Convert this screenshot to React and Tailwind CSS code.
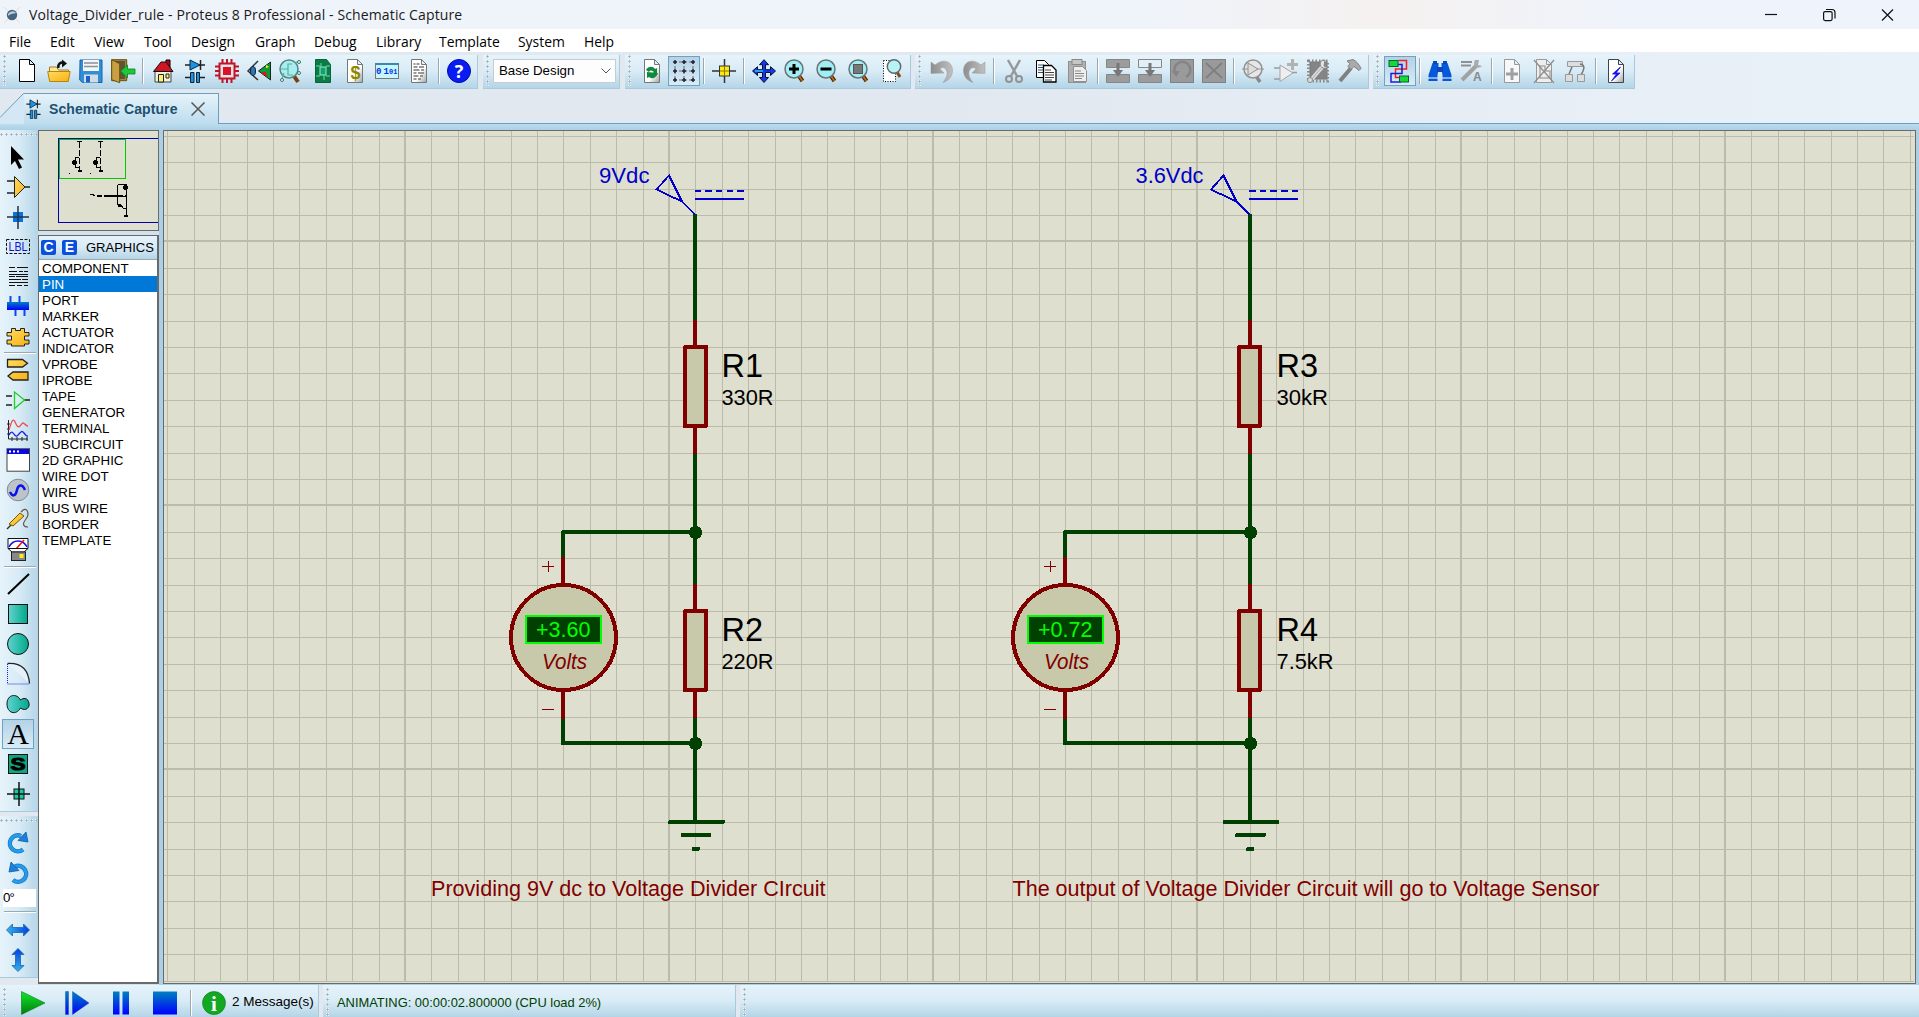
import React from "react";

/* ---------- shared pieces ---------- */

const Svg = ({ children, w = 24, h = 24 }) => (
  <svg width={w} height={h} viewBox={`0 0 ${w} ${h}`} className="block shrink-0 overflow-visible">
    {children}
  </svg>
);

const Gradients = () => (
  <svg width="0" height="0" className="absolute">
    <defs>
      <linearGradient id="gold" x1="0" y1="0" x2="1" y2="1"><stop offset="0" stopColor="#ffdc62" /><stop offset="1" stopColor="#f8b010" /></linearGradient>
      <linearGradient id="teal"><stop offset="0" stopColor="#62d3cf" /><stop offset="1" stopColor="#00a88a" /></linearGradient>
      <linearGradient id="blueV" x1="0" y1="0" x2="0" y2="1"><stop offset="0" stopColor="#0080c0" /><stop offset="1" stopColor="#0000ff" /></linearGradient>
      <linearGradient id="blueH"><stop offset="0" stopColor="#35b4e8" /><stop offset="1" stopColor="#0040e0" /></linearGradient>
      <linearGradient id="blueUp" x1="0" y1="1" x2="0" y2="0"><stop offset="0" stopColor="#35b4e8" /><stop offset="1" stopColor="#0040e0" /></linearGradient>
      <linearGradient id="greenV" x1="0" y1="0" x2="0" y2="1"><stop offset="0" stopColor="#10e828" /><stop offset="1" stopColor="#007c10" /></linearGradient>
      <linearGradient id="grayH"><stop offset="0" stopColor="#8e8e8e" /><stop offset="1" stopColor="#c0c0c0" /></linearGradient>
      <linearGradient id="paper" x1="0" y1="0" x2="1" y2="1"><stop offset="0.6" stopColor="#ffffff" /><stop offset="1" stopColor="#a0a0a0" /></linearGradient>
    </defs>
  </svg>
);

const Page = ({ stroke = "#777", fill = "url(#paper)" }) => (
  <path d="M4.500 .5h10l5 5v18h-15zM14.500 .5v5h5" fill={fill} stroke={stroke} />
);

const Lens = ({ children, cx = 10, cy = 10 }) => (
  <g>
    <path d={`M${cx + 5} ${cy + 7}l3.500 5`} stroke="#4a2000" strokeWidth="4" />
    <path d={`M${cx + 5} ${cy + 7}l3.500 5`} stroke="#b86a10" strokeWidth="2" />
    <circle cx={cx} cy={cy} r="9" fill="#9ff0f4" stroke="#6b7377" strokeWidth="1.500" />
    {children}
  </g>
);

/* ---------- toolbar icons ---------- */

const I = {
  newFile: <Svg><path d="M4.500 .5h10l5 5v17h-15zM14.500 .5v5h5" fill="#fff" stroke="#000" /></Svg>,
  open: <Svg>
    <path d="M2.500 22V8h7l2 3h10v11z" fill="#ffe79a" stroke="#a87c20" />
    <path d="M.7 12.500h22.500l-2 10h-18.500z" fill="url(#gold)" stroke="#b88410" />
    <path d="M11.500 9c-1-4 2-6 5-5.500" fill="none" stroke="#111" strokeWidth="2.500" /><path d="M15 .5l5 4l-5 4z" fill="#111" />
  </Svg>,
  save: <Svg>
    <path d="M1 1h22v22.500H3.500L.7 21z" fill="#2f8fd8" stroke="#1b62a6" />
    <rect x="4" y="1" width="16" height="11" fill="#f4f6f8" /><path d="M5 4h14M5 7.500h14" stroke="#8a9096" strokeWidth="1.300" />
    <rect x="5" y="15.500" width="14" height="8" fill="#d5dbe2" /><rect x="7" y="17" width="4" height="6.500" fill="#1b62c8" />
  </Svg>,
  exit: <Svg>
    <path d="M.7 .7h15v21h-15z" fill="#a88438" stroke="#6b5010" /><path d="M4 2h10v18H9z" fill="#5c5538" />
    <path d="M.7 .7l8 4v19l-8-3z" fill="#c9a040" stroke="#6b5010" />
    <path d="M9.500 12l7-6v4H24v5h-7.500v4z" fill="#1ec838" stroke="#0d8020" strokeWidth=".8" />
  </Svg>,
  home: <Svg>
    <path d="M15 1h4v8h-4z" fill="#c00010" stroke="#000" /><path d="M4 12h16v11H4z" fill="#eef2dc" stroke="#444" />
    <path d="M2.500 12.500L10 3h5l7 9.500z" fill="#cf1622" stroke="#111" /><path d="M7.500 15.500h5v7.500h-5z" fill="#fff36a" stroke="#222" /><path d="M15 15h3v4h-3z" fill="#fff36a" stroke="#222" />
  </Svg>,
  schematic: <Svg>
    <path d="M2 6h20M17.500 1v10" stroke="#222" strokeWidth="1.500" /><path d="M7 1v10l10-5z" fill="#1694e8" stroke="#123" />
    <path d="M2 18.500h6M17 18.500h5" stroke="#222" strokeWidth="1.500" />
    <path d="M7.500 13.500h3.500v10H7.500zM13.500 13.500h3v10h-3z" fill="#1694e8" stroke="#123" />
  </Svg>,
  chip: <Svg>
    <path d="M7.500 0v24M12 0v24M16.500 0v24M0 7.500h24M0 12h24M0 16.500h24" stroke="#c01428" strokeWidth="2" />
    <rect x="4.500" y="4.500" width="15" height="15" fill="#ece4e4" stroke="#c01428" strokeWidth="2" /><rect x="8" y="8" width="8" height="8" fill="#d8142a" />
  </Svg>,
  viewer3d: <Svg>
    <path d="M11 2L1 12l10 9" fill="none" stroke="#333" strokeWidth="1.500" /><ellipse cx="6" cy="12" rx="2.500" ry="4.500" fill="#2a78b8" stroke="#123" />
    <path d="M23.500 3v18l-12-9z" fill="#0c9a3c" stroke="#222" /><path d="M14 13l6 5l-1-5z" fill="#f01010" /><path d="M19 6l3 2l-3 1z" fill="#ff0" />
  </Svg>,
  gerber: <Svg>
    <path d="M15 17l4 6" stroke="#7a4010" strokeWidth="4" />
    <circle cx="10" cy="10" r="9" fill="#a6eef0" stroke="#5c8484" strokeWidth="1.500" />
    <path d="M2 10h7v-5h4M9 10v6h5M5 14l-2 6M16 4l4-2" fill="none" stroke="#5cae9a" strokeWidth="1.200" />
    <circle cx="20" cy="3" r="1.500" fill="#eff" stroke="#28806a" /><circle cx="3" cy="21" r="1.500" fill="#eff" stroke="#28806a" /><circle cx="20" cy="14" r="1.500" fill="#eff" stroke="#28806a" />
  </Svg>,
  green: <Svg>
    <path d="M4.500 .5h11l4 5v18h-15z" fill="#0c7c44" stroke="#064" /><rect x="9" y="8" width="6" height="8" fill="#14a070" stroke="#8ff0c8" />
    <path d="M5 7h4M5 17h4M15 7h4M15 17h4M10 4v4M13 16v5" stroke="#68dca8" />
  </Svg>,
  bill: <Svg><Page /><text x="12.500" y="20" textAnchor="middle" fontSize="18" fontWeight="bold" fontFamily="Liberation Sans" fill="#8f8600">$</text></Svg>,
  source: <Svg><rect x=".5" y="4.500" width="23" height="15" fill="#c6f6ff" stroke="#777" /><path d="M0 5h24" stroke="#3a88b0" strokeWidth="2" />
    <text x="1" y="14.500" fontSize="9" textLength="13" fontWeight="bold" fontFamily="Liberation Mono" fill="#0030e8">01</text><text x="14" y="14.500" fontSize="7" fontWeight="bold" fontFamily="Liberation Mono" fill="#0030e8">01</text></Svg>,
  notes: <Svg><Page /><path d="M6.500 5h2M9.500 5h3M6.500 8h4M12 8h5M6.500 11h6M14 11h3M6.500 14h3M11 14h6M6.500 17h5M13 17h3M6.500 20h3M11 20h3" stroke="#777" strokeWidth="1.300" /></Svg>,
  help: <Svg><circle cx="12" cy="12" r="11.500" fill="#0a1cf4" stroke="#0008b0" /><text x="12" y="18.500" textAnchor="middle" fontSize="18" fontWeight="bold" fontFamily="Open Sans" fill="#fff">?</text></Svg>,

  refresh: <Svg><Page /><path d="M6 11c2-4 7-4 9-1l2-1v6h-5l2-2c-2-2-4-2-5 0zM18 14c-2 6-7 6-9 4l-2 1v-6" fill="#0e8a3e" /></Svg>,
  grid: <Svg><path d="M2 3h20M2 12h20M2 21h20M3 2v20M12 2v20M21 2v20" stroke="#667" strokeDasharray="3 2" />
    {[3, 12, 21].map((x) => [3, 12, 21].map((y) => <path key={x + "," + y} d={`M${x - 2} ${y}h4M${x} ${y - 2}v4`} stroke="#223" strokeWidth="1.500" />))}</Svg>,
  origin: <Svg><path d="M0 12h24M12.500 0v24" stroke="#333" strokeWidth="1.500" /><rect x="7.500" y="7" width="10" height="10" fill="#ffe818" stroke="#333" /><path d="M8 12h9M12.500 7.500v9" stroke="#8a7a00" /></Svg>,
  pan: <Svg><path d="M12 .7l4.500 5h-3v5h5v-3l5 4.300l-5 4.500v-3h-5v5h3l-4.500 5l-4.500-5h3v-5h-5v3l-5-4.500l5-4.300v3h5v-5h-3z" fill="#1238f0" stroke="#061030" /><path d="M3 12h8" stroke="#28a0f0" strokeWidth="2" /></Svg>,
  zoomIn: <Svg><Lens><path d="M5 10h10M10 5v10" stroke="#000" strokeWidth="3" /></Lens></Svg>,
  zoomOut: <Svg><Lens><path d="M4.500 10h11" stroke="#000" strokeWidth="3" /></Lens></Svg>,
  zoomAll: <Svg><Lens><rect x="5.500" y="5.500" width="9" height="9" fill="#777" stroke="#555" /></Lens></Svg>,
  zoomArea: <Svg><rect x="3.500" y="1.500" width="12" height="21" fill="#fff" stroke="#000" strokeDasharray="1 1.500" /><path d="M17 13l3 5" stroke="#8a4a10" strokeWidth="3" /><circle cx="14" cy="7.500" r="6.700" fill="#b8f2f4" stroke="#5c6a70" strokeWidth="1.500" /></Svg>,

  undo: <Svg><path d="M1 3l4 3c8-7 17-4 17.500 5c0 7-4 10.500-9.500 12.500c4-5 5-9 3.500-12c-1.500-3-4-4-6.500-1.500l4 4L1 14.500z" fill="url(#grayH)" stroke="#999" strokeWidth=".5" /></Svg>,
  redo: <Svg><path d="M23 3l-4 3C11-1 2 2 1.500 11c0 7 4 10.500 9.500 12.500c-4-5-5-9-3.500-12c1.500-3 4-4 6.500-1.500l-4 4l13 .5z" fill="url(#grayH)" stroke="#999" strokeWidth=".5" /></Svg>,
  cut: <Svg><path d="M6 1l9 16M18 1L9 17" stroke="#989898" strokeWidth="2.500" /><ellipse cx="7" cy="20" rx="3" ry="3" fill="none" stroke="#929292" strokeWidth="2" /><ellipse cx="17" cy="20" rx="3" ry="3" fill="none" stroke="#929292" strokeWidth="2" /></Svg>,
  copy: <Svg><path d="M2.500 1.500h8l4 4v13h-12z" fill="#fff" stroke="#000" /><path d="M4 6h6M4 8.500h6M4 11h6M4 13.500h6" stroke="#357" />
    <path d="M9.500 6.500h8l4.500 4.500v12H9.500z" fill="#fff" stroke="#000" strokeWidth="1.300" /><path d="M11 11h6M11 13.500h9M11 16h9M11 18.500h9M11 21h7" stroke="#444" /></Svg>,
  paste: <Svg><rect x="2.500" y="2.500" width="17" height="21" fill="#b0b0b0" stroke="#909090" /><rect x="6" y=".5" width="10" height="5" fill="#c6c6c6" stroke="#888" />
    <path d="M7.500 7.500h9l4 4v11h-13z" fill="#eee" stroke="#909090" /><path d="M9 12h6M9 14.500h9M9 17h9M9 19.500h7" stroke="#888" /></Svg>,
  blockCopy: <Svg><path d="M.5 .5h23v8H.5zM.5 15.500h23v8H.5z" fill="#9c9c9c" stroke="#868686" /><path d="M12 4v9" stroke="#777" strokeWidth="3" /><path d="M7 11h10l-5 7z" fill="#777" /></Svg>,
  blockMove: <Svg><path d="M.5 .5h23v8H.5z" fill="#e2eff6" stroke="#868686" /><path d="M.5 15.500h23v8H.5z" fill="#9c9c9c" stroke="#868686" /><path d="M12 4v9" stroke="#777" strokeWidth="3" /><path d="M7 11h10l-5 7z" fill="#777" /></Svg>,
  blockRotate: <Svg><rect x=".5" y=".5" width="23" height="23" fill="#9a9a9a" stroke="#808080" /><path d="M5 14a8 8 0 1 1 11 4" fill="none" stroke="#858585" strokeWidth="2.500" /><path d="M1.500 12h8l-3 6z" fill="#858585" /></Svg>,
  blockDelete: <Svg><rect x=".5" y=".5" width="23" height="23" fill="#9a9a9a" stroke="#808080" /><path d="M4 4l16 15M20 4L4 19" stroke="#808080" strokeWidth="2" /></Svg>,
  pick: <Svg><path d="M14 17l4 6" stroke="#888" strokeWidth="3.500" /><circle cx="11" cy="10" r="9" fill="#e6e6e6" stroke="#929292" strokeWidth="1.500" /><path d="M0 10h22" stroke="#929292" /><path d="M6 4v12l10-6z" fill="#ddd" stroke="#929292" /></Svg>,
  makeDevice: <Svg><path d="M0 9h6M0 20h6M18 13.500h5" stroke="#9a9a9a" strokeWidth="1.500" /><path d="M6 6v16.500l13-8.500z" fill="#eee" stroke="#a5a5a5" /><path d="M18.500 0v11M13 5.500h11" stroke="#b2b2b2" strokeWidth="3" /></Svg>,
  packaging: <Svg><rect x="4" y="3" width="17" height="17" fill="#858585" stroke="#777" /><path d="M2.500 2h19v20h-19z" fill="none" stroke="#888" strokeWidth="3" strokeDasharray="1.500 2" />
    <path d="M5 21l12-14" stroke="#ddd" strokeWidth="4" /><path d="M5 21l12-14" stroke="#aaa" strokeWidth="1" /><path d="M15 2c-3 6 3 9 7 6l-4-1l1-6z" fill="#e5e5e5" stroke="#888" /><circle cx="4" cy="21" r="2.500" fill="#ddd" stroke="#888" /></Svg>,
  decompose: <Svg><path d="M2 22L13 9" stroke="#808080" strokeWidth="4" /><path d="M9 2l6-1.500c4 2 6 5 8 9l-2 2l-5-4l-3 3l-3-3l2-3z" fill="#aaa" stroke="#808080" /></Svg>,

  autorouter: <Svg>
    <path d="M10.500 1.500h8v8.500h-11v8.500h8" fill="none" stroke="#f02020" strokeWidth="1.500" /><path d="M9 5.500h5v9H3v8.500h10" fill="none" stroke="#1818e8" strokeWidth="1.500" />
    <rect x="1" y="1.500" width="9" height="6" fill="#18d838" stroke="#063" /><rect x="11.500" y="17" width="9" height="6" fill="#18d838" stroke="#063" /></Svg>,
  search: <Svg><path d="M4.500 4h6v7l-1 5v6H.5v-6zM13.500 4h6l4 12v6h-9v-6l-1-5z" fill="#0758d8" /><path d="M5 2h4v3H5zM15 2h4v3h-4zM9 8h6v5H9z" fill="#0a48c0" /><path d="M0 19h10M14 19h10" stroke="#fff" /></Svg>,
  propertyTool: <Svg><path d="M1 3h11M1 6.500h10" stroke="#909090" strokeWidth="2" /><path d="M2 21L17 6" stroke="#a2a2a2" strokeWidth="4" /><path d="M15 1c-3 6 3 10 7 6l-4-1l1-5z" fill="#aaa" /><text x="13" y="22" fontSize="12" fontWeight="bold" fontFamily="Liberation Sans" fill="#888">A</text></Svg>,
  addSheet: <Svg><Page stroke="#999" fill="#f6f8f9" /><path d="M6 15h12M12 9v12" stroke="#a0a0a0" strokeWidth="3" /></Svg>,
  delSheet: <Svg><Page stroke="#999" fill="#eee" /><path d="M8 7h5v5h5v7H8z" fill="none" stroke="#aaa" strokeWidth="1.500" /><path d="M2 1l20 23M22 1L2 24" stroke="#8d8d8d" strokeWidth="1.300" /></Svg>,
  exitParent: <Svg><path d="M3.500 2.500h15v5h-15z" fill="#ddd" stroke="#999" /><path d="M8 8L5 15M16 5c6 1 4 6 1 11" fill="none" stroke="#777" strokeWidth="1.500" /><path d="M1.500 15.500h7v7h-7zM13.500 15.500h7v7h-7z" fill="#ddd" stroke="#999" /></Svg>,
  erc: <Svg><Page stroke="#444" /><path d="M16.500 8l-8 7h4l-5 7l8.500-8h-4z" fill="#1010ec" stroke="#1010ec" strokeWidth=".8" /></Svg>,
};

/* ---------- left mode bar icons ---------- */

const M = {
  select: <Svg><path d="M5 1v19l4-4l4 8l3-1.500l-4-8h6z" fill="#000" /></Svg>,
  component: <Svg><path d="M1 6h8M1 18h8M18 12h6" stroke="#222" strokeWidth="1.500" /><path d="M8.500 1.500v21L19 12z" fill="url(#gold)" stroke="#222" /></Svg>,
  junction: <Svg><rect x="7" y="7" width="10" height="10" fill="#0870e0" /><path d="M1 12h22M12 1v23" stroke="#234" strokeWidth="1.500" /></Svg>,
  label: <Svg><rect x=".5" y="4.500" width="23" height="14" fill="none" stroke="#111" strokeDasharray="3 1.500" /><text x="2.500" y="16" fontSize="12" textLength="19" lengthAdjust="spacingAndGlyphs" fontFamily="Liberation Sans" fill="#1010d8">LBL</text></Svg>,
  script: <Svg><g shapeRendering="crispEdges"><path d="M3 2.500h6M11 2.500h11M3 6.500h8M13 6.500h4M18 6.500h4M3 9.500h19M3 11.500h6M10 11.500h12M3 14.500h12M16 14.500h6M3 17.500h19M3 20.500h6M11 20.500h5M18 20.500h4" stroke="#111" /></g></Svg>,
  bus: <Svg><path d="M4.500 1v10M13.500 1v10M9.500 13v8M18.500 13v8" stroke="#0a48e8" strokeWidth="2" /><rect x="1" y="7" width="22" height="8" fill="url(#blueV)" /></Svg>,
  subcircuit: <Svg><path d="M5.500 3.500h4v2h5v-2h4v4h4.500v3.500h-4.500v4h4.500v4h-4.500v2h-13v-2H1v-4h4.500v-4H1V7.500h4.500z" fill="url(#gold)" stroke="#222" /></Svg>,
  terminal: <Svg><path d="M1.500 1.500h15l5 3.800l-5 3.700h-15zM22 14h-15l-5 4l5 4h15z" fill="url(#gold)" stroke="#222" strokeWidth="1.300" /></Svg>,
  pin: <Svg><path d="M0 8h6M0 17h6M18 12h6" stroke="#222" strokeWidth="1.500" /><path d="M8.500 4v16.500L18.500 12z" fill="none" stroke="#20d020" strokeWidth="1.300" /></Svg>,
  graph: <Svg><path d="M2.500 2v19H22M6 19v4M11 19v4M16 19v4M21 19v4M1 6h3M1 11h3M1 16h3" stroke="#222" fill="none" /><path d="M3 12C6 2 7-1 10 6s5-1 7-1s2 3 5 3" fill="none" stroke="#f05050" strokeWidth="1.300" /><path d="M3 17c4-8 5 3 8 1s4-7 7-3s3 3 4 3" fill="none" stroke="#2020e8" strokeWidth="1.300" /></Svg>,
  active: <Svg><rect x="1" y=".7" width="22.500" height="22.500" fill="#fff" stroke="#444" /><path d="M1 1h22v5H1z" fill="#0808e0" /><path d="M3 3.500h2M7 3.500h2M11 3.500h2" stroke="#fff" strokeWidth="2" /></Svg>,
  generator: <Svg><circle cx="12" cy="12" r="10.800" fill="#bcc3c9" stroke="#858b90" /><path d="M4 14c3 6 6 3 7-2s5-7 8 0" fill="none" stroke="#0a10f0" strokeWidth="2.500" /></Svg>,
  probe: <Svg><path d="M1 21l4-4" stroke="#333" strokeWidth="1.500" /><path d="M3 16L14 5l4 3L7 18z" fill="url(#gold)" stroke="#765400" /><path d="M15 4c6-7 9 2 5 7s-3 8 2 8" fill="none" stroke="#654" strokeWidth="1.200" /></Svg>,
  instrument: <Svg><path d="M2 .5h20v10H2z" fill="#fff" stroke="#111" /><path d="M3 9c4-8 14-8 18 0" fill="none" stroke="#1010ee" strokeWidth="1.500" /><path d="M10 11l8-9" stroke="#f01010" strokeWidth="1.500" /><path d="M2 10.500h20l-4 3.500H6z" fill="#fff" stroke="#111" /><rect x="5.500" y="14" width="14" height="8.500" fill="#888" stroke="#222" /><rect x="13.500" y="16" width="4" height="4" fill="#ffe820" /></Svg>,
  line: <Svg><path d="M2 22L23 2" stroke="#000" strokeWidth="2" /></Svg>,
  box: <Svg><rect x="2.500" y="2.500" width="19" height="19" fill="url(#teal)" stroke="#111" /></Svg>,
  circle: <Svg><circle cx="12" cy="12" r="10.500" fill="url(#teal)" stroke="#111" /></Svg>,
  arc: <Svg><path d="M1.500 2v20h22" fill="none" stroke="#2020e0" strokeDasharray="1 1" /><path d="M1.500 1.500c15-1 21 7 22 20" fill="#e5f2fb" stroke="#222" strokeWidth="1.300" /></Svg>,
  path: <Svg><path d="M14.500 8C11 1 1 2 1 12c0 9 9 12 13.500 4C20 20 24 15 23 11.500C22 5 17 6 14.500 8z" fill="url(#teal)" stroke="#111" /></Svg>,
  text: <Svg><text x="12" y="22" textAnchor="middle" fontSize="30" fontFamily="Liberation Serif" fill="#000">A</text></Svg>,
  symbol: <Svg><rect x="2.500" y="2.500" width="19" height="19" fill="#0ca580" stroke="#111" /><text x="4.500" y="17.500" fontSize="16" textLength="15" lengthAdjust="spacingAndGlyphs" fontWeight="bold" fontFamily="Liberation Sans" fill="#000" stroke="#000">S</text></Svg>,
  marker: <Svg><rect x="8" y="7" width="10" height="10" fill="#18c8a0" stroke="#111" /><path d="M1 12h23M13 0v24" stroke="#111" strokeWidth="1.500" /></Svg>,
  cw: <Svg><path d="M17 18.500a8 8 0 1 1-2-13.500" fill="none" stroke="#1676c8" strokeWidth="4.500" /><path d="M17 18.500a8 8 0 1 1-2-13.500" fill="none" stroke="#269ce8" strokeWidth="3" /><path d="M12 9.500l8-8.500l2 10z" fill="#1b80dc" stroke="#0f5ca4" strokeWidth=".8" /></Svg>,
  ccw: <Svg><path d="M7 19a8 8 0 1 0 2-13.500" fill="none" stroke="#1676c8" strokeWidth="4.500" /><path d="M7 19a8 8 0 1 0 2-13.500" fill="none" stroke="#269ce8" strokeWidth="3" /><path d="M13 9.500L5 1L3 11z" fill="#1b80dc" stroke="#0f5ca4" strokeWidth=".8" /></Svg>,
  flipH: <Svg><path d="M.5 12l6-6v3.500h11V6l6 6l-6 6v-3.500h-11V18z" fill="url(#blueH)" stroke="#1b62b4" strokeWidth=".8" /></Svg>,
  flipV: <Svg><path d="M12 .5l6 6h-3.500v11H18l-6 6l-6-6h3.500v-11H6z" fill="url(#blueUp)" stroke="#1b62b4" strokeWidth=".8" /></Svg>,
};

/* ---------- chrome ---------- */

const BAR = "bg-linear-to-b from-[#e6f3fa] via-[#d8ebf6] to-[#b4d5e7]";

const Handle = ({ className = "" }) => (
  <div className={`w-[3px] bg-[radial-gradient(circle_at_1.5px_1.5px,#9aabb8_0.8px,#f8fcff_1.5px,transparent_2px)] bg-[length:3px_5px] ${className}`} />
);

const Btn = ({ children, active }) => (
  <div className={active ? "flex h-[30px] w-8 items-center justify-center border border-[#6fa2c0] bg-linear-to-b from-[#b4d2e6] to-[#d9ebf6]" : "flex h-[30px] w-8 items-center justify-center"}>{children}</div>
);

const Sep = () => (
  <div className="flex h-[26px] w-2 justify-center"><div className="w-px bg-[#9ca7ae]" /><div className="w-px bg-white" /></div>
);

const Group = ({ items, active, className }) => (
  <div className={`flex h-[34px] items-center border-r border-b border-[#a9c9dd] pb-[2px] ${BAR} ${className}`}>
    <Handle className="ml-[3px] mr-[5px] h-[31px]" />
    {items.map((k, i) => (k === "|" ? <Sep key={i} /> : <Btn key={i} active={k === active}>{I[k]}</Btn>))}
  </div>
);

const TitleBar = () => (
  <div className="flex h-[29px] items-center bg-linear-to-r from-[#eff3fa] from-60% via-[#f5f1f0] via-72% to-[#eff3fb] to-85%">
    <svg width="18" height="18" viewBox="0 0 18 18" className="ml-[3px] block">
      <path d="M1 1l16 16M17 1L1 17" stroke="#e6c8a0" strokeWidth="1" opacity=".6" />
      <circle cx="9" cy="9" r="5.200" fill="#4a6480" /><path d="M5 8c3-4 6-3 8-1c-2 1-5 0-8 3z" fill="#b8d0e2" />
    </svg>
    <span className="ml-[8px] whitespace-nowrap font-['Open_Sans'] text-[14px] tracking-[0.12px] text-[#1a1a1a]">Voltage_Divider_rule - Proteus 8 Professional - Schematic Capture</span>
    <svg width="140" height="14" viewBox="0 0 140 14" className="ml-auto mr-[19px] block" fill="none" stroke="#111" strokeWidth="1.200">
      <path d="M5 6.500h12" />
      <rect x="63.600" y="3.600" width="8.500" height="9" rx="1.500" /><path d="M66 1.500h6a3 3 0 0 1 3 3v6" />
      <path d="M122 1.500l11 11M133 1.500l-11 11" />
    </svg>
  </div>
);

const MENU = [["File", "w-[41px]"], ["Edit", "w-11"], ["View", "w-[50px]"], ["Tool", "w-[47px]"], ["Design", "w-16"], ["Graph", "w-[59px]"], ["Debug", "w-[62px]"], ["Library", "w-[63px]"], ["Template", "w-[79px]"], ["System", "w-[66px]"], ["Help", "w-11"]];

const MenuBar = () => (
  <div className="flex h-[23px] items-center bg-white pt-[2px] pl-[9px] font-['Open_Sans'] text-[13.9px] leading-5 text-black">
    {MENU.map(([t, w]) => <div key={t} className={`shrink-0 ${w}`}>{t}</div>)}
  </div>
);

const Toolbars = () => (
  <div className="flex h-[37px] gap-[5px] bg-linear-to-r from-[#e2e8ef] from-50% to-[#eaf2f9] pt-[3px]">
    <Group className="w-[478px]" items={["newFile", "open", "save", "exit", "|", "home", "schematic", "chip", "viewer3d", "gerber", "green", "bill", "source", "notes", "|", "help"]} />
    <div className={`flex h-[34px] w-[137px] items-center border-r border-b border-[#a9c9dd] pb-[2px] ${BAR}`}>
      <Handle className="ml-[3px] h-[31px]" />
      <div className="ml-[4px] flex h-6 w-[123px] items-center justify-between border border-[#c6cdd2] bg-[#fdfdfd] pl-[5px] pr-[4px]">
        <span className="whitespace-nowrap font-['Liberation_Sans'] text-[13.3px] text-black">Base Design</span>
        <svg width="10" height="6" viewBox="0 0 10 6" fill="none" stroke="#555"><path d="M.5 .5L5 5L9.500 .5" /></svg>
      </div>
    </div>
    <Group className="w-[286px]" active="grid" items={["refresh", "grid", "|", "origin", "|", "pan", "zoomIn", "zoomOut", "zoomAll", "zoomArea"]} />
    <Group className="-ml-px w-[454px]" items={["undo", "redo", "|", "cut", "copy", "paste", "|", "blockCopy", "blockMove", "blockRotate", "blockDelete", "|", "pick", "makeDevice", "packaging", "decompose"]} />
    <Group className="-ml-px w-[262px]" active="autorouter" items={["autorouter", "|", "search", "propertyTool", "|", "addSheet", "delSheet", "exitParent", "|", "erc"]} />
  </div>
);

const TabBar = () => (
  <div className="flex h-[41px] flex-col bg-linear-to-r from-[#e2e8ef] from-50% to-[#eaf2f9]">
    <div className="mt-[4px] flex h-[31px]">
      <svg width="24" height="31" viewBox="0 0 24 31" className="block"><path d="M0 31V24.500L23.500 .5H24V31z" fill="#d3e8f4" /><path d="M0 24.500L23.500 .5H24" fill="none" stroke="#6b9fbd" /></svg>
      <div className="flex w-[195px] items-center border-t border-r border-[#6b9fbd] bg-linear-to-b from-[#e6f3fa] to-[#bcdcee]">
        <svg width="17" height="20" viewBox="0 0 24 24" className="ml-[1px] block" preserveAspectRatio="none">{I.schematic.props.children}</svg>
        <span className="ml-[7px] whitespace-nowrap font-['Liberation_Sans'] text-[14px] font-bold tracking-[0.1px] text-[#20506f]">Schematic Capture</span>
        <svg width="14" height="14" viewBox="0 0 14 14" className="ml-[13px] block" stroke="#555" strokeWidth="1.500"><path d="M.5 .5l13 13M13.500 .5l-13 13" /></svg>
      </div>
      <div className="flex-1 border-b border-[#6b9fbd]" />
    </div>
    <div className="h-[6px] bg-linear-to-b from-[#bcdcee] to-[#abd0e4]" />
  </div>
);

/* ---------- left side ---------- */

const MBtn = ({ k, active }) => (
  <div className={active ? "flex h-[30px] w-8 items-center justify-center border border-[#6fa2c0] bg-linear-to-b from-[#b4d2e6] to-[#d9ebf6]" : "flex h-[30px] w-8 items-center justify-center"}>{M[k]}</div>
);
const HSep = () => <div className="flex h-[3px] w-8 flex-col"><div className="h-px bg-[#9ca7ae]" /><div className="h-px bg-white" /></div>;
const HHandle = () => <div className="h-[3px] w-[37px] bg-[radial-gradient(circle_at_1.5px_1.5px,#9aabb8_0.8px,#f8fcff_1.5px,transparent_2px)] bg-[length:5px_3px]" />;
const VBAR = "bg-linear-to-r from-[#e6f3fa] via-[#d8ebf6] to-[#b4d5e7]";

const ModeBar = () => (
  <div className="flex w-[38px] shrink-0 flex-col bg-[#e2e8ef]">
    <div className={`flex h-[682px] flex-col border-b border-[#a9c9dd] pt-[3px] ${VBAR}`}>
      <HHandle />
      <div className="ml-[2px] mt-[6px] flex flex-col">
        {["select", "component", "junction", "label", "script", "bus", "subcircuit"].map((k) => <MBtn key={k} k={k} />)}
        <div className="ml-[2px]"><HSep /></div>
        {["terminal", "pin", "graph", "active", "generator", "probe", "instrument"].map((k) => <MBtn key={k} k={k} />)}
        <div className="mt-px ml-[2px]"><HSep /></div>
        {["line", "box", "circle", "arc", "path", "text", "symbol", "marker"].map((k) => <MBtn key={k} k={k} active={k === "text"} />)}
      </div>
    </div>
    <div className={`mt-[4px] flex h-[162px] flex-col border-b border-[#a9c9dd] pt-[3px] ${VBAR}`}>
      <HHandle />
      <div className="ml-[2px] mt-[6px] flex flex-col"><MBtn k="cw" /><MBtn k="ccw" /></div>
      <div className="ml-[3px] mt-[1px] flex h-[18px] w-[33px] items-center bg-white font-['Liberation_Sans'] text-[13.3px] text-black"><span className="tracking-[-0.8px]">0°</span></div>
      <div className="ml-[4px] mt-[4px]"><HSep /></div>
      <div className="ml-[2px] mt-px flex flex-col"><MBtn k="flipH" /><MBtn k="flipV" /></div>
    </div>
  </div>
);

const Overview = () => (
  <div className="h-[101px] border border-[#6a6a6a] bg-[#dfdfcf]">
    <svg width="119" height="99" viewBox="39 131 119 99" className="block" fill="none" shapeRendering="crispEdges">
      <path d="M160 138.500H58.500V222.500H160" stroke="#0000b0" />
      <rect x="59.500" y="139.500" width="66" height="39" stroke="#00c800" />
      {[0, 21].map((d) => (
        <g key={d} stroke="#000" transform={`translate(${d - 0.5} 0)`}>
          <path d="M77.500 141.500h5" /><path d="M80 142v31" strokeDasharray="6 2" />
          <path d="M79.500 157.500h-4v10h4" /><circle cx="75" cy="162.500" r="2" fill="#000" /><path d="M78.500 171h4" strokeWidth="2" /><path d="M69 173.500h1" />
        </g>
      ))}
      <g stroke="#000"><path d="M90 194.500h3l2 1.500h31" strokeWidth="1.200" strokeDasharray="5 2" /><path d="M109 196h8" strokeWidth="2" /><path d="M117.500 184.500h9v5M117.500 184.500v20h3l3 4h3M126.500 189v28M117.500 196.500h9" /><circle cx="125.500" cy="187.500" r="2" fill="#000" /><path d="M118 205.500h4M124 216h4" strokeWidth="2" /></g>
    </svg>
  </div>
);

const GRAPHICS = ["COMPONENT", "PIN", "PORT", "MARKER", "ACTUATOR", "INDICATOR", "VPROBE", "IPROBE", "TAPE", "GENERATOR", "TERMINAL", "SUBCIRCUIT", "2D GRAPHIC", "WIRE DOT", "WIRE", "BUS WIRE", "BORDER", "TEMPLATE"];

const ObjectPanel = () => (
  <div className="flex w-[121px] shrink-0 flex-col gap-[4px] bg-[#d0e2ee] font-['Liberation_Sans'] text-[13.33px] text-black">
    <Overview />
    <div className="flex h-[749px] flex-col border-2 border-t-1 border-l-1 border-[#6a6a6a] bg-white">
      <div className={`flex h-[24px] items-center border-b border-[#9aa] pl-[2px] ${BAR}`}>
        <div className="flex h-[15px] w-[15px] items-center justify-center rounded-xs bg-[#0a50dc] text-[14px] font-bold text-white">C</div>
        <div className="ml-[6px] flex h-[15px] w-[15px] items-center justify-center rounded-xs bg-[#0a50dc] text-[14px] font-bold text-white">E</div>
        <span className="ml-[9px] text-[13px]">GRAPHICS</span>
      </div>
      {GRAPHICS.map((g) => (
        <div key={g} className={g === "PIN" ? "h-4 bg-[#0078d7] pl-[3px] leading-[17px] text-white" : "h-4 pl-[3px] leading-[17px]"}>{g}</div>
      ))}
    </div>
  </div>
);

/* ---------- schematic sheet ---------- */

const X0 = 164, Y0 = 131, W = 1751, H = 852;

const GridLines = () => {
  const out = [];
  for (let k = -20; k < 50; k++) {
    const major = k % 10 === 0;
    const x = Math.round(669 + 26.4 * k);
    if (x >= X0 && x < 1914) out.push(<rect key={"v" + k} x={major ? x - 1 : x} y={Y0} width={major ? 2 : 1} height={H - 1} />);
    const y = Math.round(241.4 + 26.4 * k);
    if (y >= Y0 && y < 983) out.push(<rect key={"h" + k} x={X0} y={major ? y - 1 : y} width={W - 1} height={major ? 2 : 1} />);
  }
  return <g fill="#bbbbab">{out}</g>;
};

const Label = ({ x, y, w, size, fill = "#000", children, ...rest }) => (
  <text x={x} y={y} textLength={w} lengthAdjust="spacingAndGlyphs" fontSize={size} fill={fill} fontFamily="Liberation Sans, sans-serif" shapeRendering="auto" {...rest}>{children}</text>
);

const Resistor = ({ x, left, y, name, value, nameW, valueW }) => (
  <g>
    <path d={`M${x} ${y - 25}v25M${x} ${y + 82}v27`} stroke="#800000" strokeWidth="4" />
    <rect x={left} y={y + 2} width="21" height="79" fill="#c8c8aa" stroke="#800000" strokeWidth="4" strokeLinejoin="round" />
    <Label x={x + 26.5} y={y + 32} w={nameW} size="34">{name}</Label>
    <Label x={x + 26.5} y={y + 60} w={valueW} size="22.500">{value}</Label>
  </g>
);

const Circuit = ({ x, mx, body, source, sx, sw, top, bottom, reading, g, sign }) => (
  <g fill="none">
    <g stroke="#004000" strokeWidth="4">
      <path d={`M${x} 214v107M${x} 454v130M${x} 718v103`} />
      <path d={`M${x} 532H${mx}V558M${mx} 718V743H${x}`} strokeLinejoin="round" />
      <path d={`M${g - 24.5} 822h53M${g - 12} 835h27M${g - 1} 849h4.500`} strokeLinecap="round" />
    </g>
    <circle cx={x + 0.5} cy="532.500" r="6.700" fill="#004000" /><circle cx={x + 0.5} cy="743.500" r="6.700" fill="#004000" />
    <g stroke="#0000c8" strokeWidth="1.800">
      <path d={`M${g - 12.5} 201.500L${g - 25.5} 175.500L${g - 38} 189.500L${g - 12.5} 201.500L${g + 0.5} 214.500`} fill="none" />
      <path d={`M${g} 199h49`} strokeWidth="2" /><path d={`M${g} 191h49`} strokeWidth="2" strokeDasharray="6.500 4.200" />
    </g>
    <Label x={sx} y="182.500" w={sw} size="22.500" fill="#0000c8">{source}</Label>
    <Resistor x={x} left={body} y={345} {...top} />
    <Resistor x={x} left={body} y={609} {...bottom} />
    <path d={`M${mx} 557v28M${mx} 690v29`} stroke="#800000" strokeWidth="4" />
    <circle cx={mx + 0.5} cy="637.500" r="52.500" fill="#c8c8aa" stroke="#800000" strokeWidth="4" />
    <path d={`M${sign} 566.500h12M${sign + 6.5} 561v11M${sign} 709.500h12`} stroke="#800000" />
    <rect x={mx - 37} y="616" width="75" height="27" fill="#004000" stroke="#00ff00" strokeWidth="2" />
    <Label x={mx - 27} y="636.500" w="54.500" size="22.500" fill="#00ff00">{reading}</Label>
    <Label x={mx - 21} y="668.500" w="45" size="22.500" fill="#800000" fontStyle="italic">Volts</Label>
  </g>
);

const Sheet = () => (
  <div className="ml-[4px] h-[854px] w-[1753px] shrink-0 border border-[#6a6a6a] bg-[#dfdfcf]">
    <svg width={W} height={H} viewBox={`${X0} ${Y0} ${W} ${H}`} className="block" shapeRendering="crispEdges">
      <GridLines />
      <Circuit x={695} mx={563} body={685} sign={542} g={694.5} source="9Vdc" sx={599} sw={50.5} reading="+3.60"
        top={{ name: "R1", value: "330R", nameW: 41.5, valueW: 52 }} bottom={{ name: "R2", value: "220R", nameW: 41.5, valueW: 52 }} />
      <Circuit x={1250} mx={1065} body={1239} sign={1044} g={1249} source="3.6Vdc" sx={1135.5} sw={68} reading="+0.72"
        top={{ name: "R3", value: "30kR", nameW: 41.5, valueW: 51.5 }} bottom={{ name: "R4", value: "7.5kR", nameW: 41.5, valueW: 57 }} />
      <Label x={431} y="896" w="394.500" size="22.500" fill="#800000">Providing 9V dc to Voltage Divider CIrcuit</Label>
      <Label x={1012.5} y="896" w="587" size="22.500" fill="#800000">The output of Voltage Divider Circuit will go to Voltage Sensor</Label>
    </svg>
  </div>
);

/* ---------- status bar ---------- */

const StatusBar = () => (
  <div className="flex h-[32px] gap-[4px] bg-[#e2e8ef] font-['Liberation_Sans'] text-[13.3px]">
    <div className={`flex w-[319px] items-center border-r border-[#a9c9dd] pt-[3px] ${BAR}`}>
      <Handle className="ml-[3px] h-[29px]" />
      <svg width="24" height="24" viewBox="0 0 24 24" className="ml-[15px] block"><path d="M.5 .5v23L24 12z" fill="url(#greenV)" stroke="#087818" strokeWidth=".6" /></svg>
      <svg width="24" height="24" viewBox="0 0 24 24" className="ml-[20px] block"><path d="M.5 .5h3v23h-3zM7.500 .5v23L24 12z" fill="url(#blueV)" stroke="#0840a0" strokeWidth=".4" /></svg>
      <svg width="16" height="24" viewBox="0 0 16 24" className="ml-[24px] block"><path d="M0 .5h6.500v23H0zM9.500 .5H16v23H9.500z" fill="url(#blueV)" /></svg>
      <svg width="24" height="24" viewBox="0 0 24 24" className="ml-[24px] block"><path d="M0 .5h24v23H0z" fill="url(#blueV)" /></svg>
      <div className="ml-[10px]"><Sep /></div>
      <svg width="24" height="24" viewBox="0 0 24 24" className="ml-[7px] block"><circle cx="12" cy="12" r="11.500" fill="#12a822" stroke="#0a7c18" strokeWidth=".6" /><text x="12" y="19.500" textAnchor="middle" fontSize="21" fontWeight="bold" fontFamily="Liberation Serif" fill="#fff">i</text></svg>
      <span className="ml-[6px] whitespace-nowrap text-[13.5px] text-black">2 Message(s)</span>
    </div>
    <div className={`flex w-[413px] items-center border-r border-[#a9c9dd] pt-[3px] ${BAR}`}>
      <Handle className="ml-[3px] h-[29px]" />
      <span className="ml-[8px] whitespace-nowrap text-[12.9px] text-[#004000]">ANIMATING: 00:00:02.800000 (CPU load 2%)</span>
    </div>
    <div className={`flex flex-1 items-center pt-[3px] ${BAR}`}><Handle className="ml-[3px] h-[29px]" /></div>
  </div>
);

export default function App() {
  return (
    <div className="flex h-[1017px] w-[1919px] flex-col overflow-hidden bg-[#e2e8ef]">
      <Gradients />
      <TitleBar />
      <MenuBar />
      <Toolbars />
      <TabBar />
      <div className="flex h-[855px] bg-[#abcfe4]">
        <ModeBar />
        <ObjectPanel />
        <Sheet />
      </div>
      <StatusBar />
    </div>
  );
}
